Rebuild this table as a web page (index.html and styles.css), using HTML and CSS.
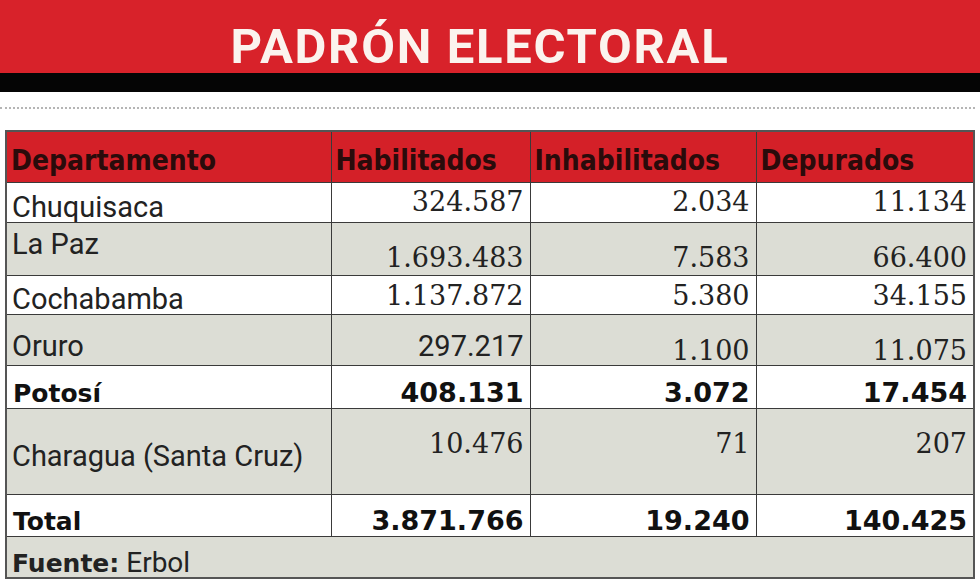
FILE: index.html
```html
<!DOCTYPE html>
<html lang="es">
<head>
<meta charset="utf-8">
<title>Padrón Electoral</title>
<link rel="stylesheet" href="styles.css">
</head>
<body>
<header class="banner">
  <h1 class="title">PADRÓN ELECTORAL</h1>
</header>
<div class="black-bar"></div>
<div class="dots"></div>
<table class="padron">
  <colgroup>
    <col class="c1"><col class="c2"><col class="c3"><col class="c4">
  </colgroup>
  <thead>
    <tr class="head">
      <th>Departamento</th>
      <th>Habilitados</th>
      <th>Inhabilitados</th>
      <th>Depurados</th>
    </tr>
  </thead>
  <tbody>
    <tr class="r-chuq white">
      <td class="name">Chuquisaca</td>
      <td class="num serif">324.587</td>
      <td class="num serif">2.034</td>
      <td class="num serif">11.134</td>
    </tr>
    <tr class="r-lapaz gray">
      <td class="name">La Paz</td>
      <td class="num serif">1.693.483</td>
      <td class="num serif">7.583</td>
      <td class="num serif">66.400</td>
    </tr>
    <tr class="r-cocha white">
      <td class="name">Cochabamba</td>
      <td class="num serif">1.137.872</td>
      <td class="num serif">5.380</td>
      <td class="num serif">34.155</td>
    </tr>
    <tr class="r-oruro gray">
      <td class="name">Oruro</td>
      <td class="num sans">297.217</td>
      <td class="num serif">1.100</td>
      <td class="num serif">11.075</td>
    </tr>
    <tr class="r-potosi white bold">
      <td class="name">Potosí</td>
      <td class="num">408.131</td>
      <td class="num">3.072</td>
      <td class="num">17.454</td>
    </tr>
    <tr class="r-chara gray">
      <td class="name">Charagua (Santa Cruz)</td>
      <td class="num serif">10.476</td>
      <td class="num serif">71</td>
      <td class="num serif">207</td>
    </tr>
    <tr class="r-total white bold">
      <td class="name">Total</td>
      <td class="num">3.871.766</td>
      <td class="num">19.240</td>
      <td class="num">140.425</td>
    </tr>
    <tr class="r-src gray">
      <td class="source" colspan="4"><strong>Fuente:</strong> Erbol</td>
    </tr>
  </tbody>
</table>
</body>
</html>
```

FILE: styles.css
```css
html, body {
  margin: 0;
  padding: 0;
  background: #ffffff;
}

body {
  width: 980px;
  height: 580px;
  overflow: hidden;
  font-family: Roboto, "Liberation Sans", sans-serif;
  color: #1a1a1a;
}

.banner {
  height: 73px;
  background: #d8222a;
  display: flex;
  align-items: flex-start;
  justify-content: center;
  padding: 22px 20px 0 0;
  box-sizing: border-box;
}

.title {
  margin: 0;
  color: #fbf3ee;
  font-family: Roboto, "Liberation Sans", sans-serif;
  font-weight: 700;
  font-size: 49px;
  letter-spacing: 1.7px;
  line-height: 1;
}

.black-bar {
  height: 19px;
  background: #050505;
}

.dots {
  margin-top: 15px;
  margin-right: 5px;
  border-top: 2px dotted #b5b5b5;
}

.padron {
  margin: 21px 0 0 5px;
  width: 968px;
  border-collapse: collapse;
  table-layout: fixed;
  border: 2px solid #555;
}

.c1 { width: 325px; }
.c2 { width: 199px; }
.c3 { width: 226px; }
.c4 { width: 218px; }

.padron th,
.padron td {
  box-sizing: border-box;
  border: 1.5px solid #3a3a3a;
  padding: 0 6px 0 5px;
  overflow: hidden;
  white-space: nowrap;
  line-height: 1;
  vertical-align: bottom;
}

.head th {
  height: 51px;
  background: #d42028;
  color: #2a0b0b;
  text-align: left;
  font-family: "DejaVu Sans Condensed", "DejaVu Sans", sans-serif;
  font-stretch: condensed;
  font-weight: 700;
  font-size: 28px;
  padding-bottom: 7px;
  padding-left: 4px;
}

.white td { background: #ffffff; }
.gray td { background: #dcddd5; }

.name {
  font-size: 29px;
  font-weight: 400;
  color: #222;
}

.num {
  text-align: right;
}

.serif {
  font-family: "DejaVu Serif", "Liberation Serif", serif;
  font-size: 27px;
  color: #222;
}

.sans {
  font-family: Roboto, "Liberation Sans", sans-serif;
  font-size: 29px;
  color: #222;
}

/* Chuquisaca */
.r-chuq td { height: 40px; }
.r-chuq .name { padding-bottom: 0; }
.r-chuq .serif { vertical-align: top; padding-top: 5px; }

/* La Paz */
.r-lapaz td { height: 53px; }
.r-lapaz .name { vertical-align: top; padding-top: 7px; }
.r-lapaz .serif { padding-bottom: 4px; }

/* Cochabamba */
.r-cocha td { height: 39px; }
.r-cocha .name { padding-bottom: 0; }
.r-cocha .serif { padding-bottom: 5px; }

/* Oruro */
.r-oruro td { height: 51px; }
.r-oruro .name { padding-bottom: 4px; }
.r-oruro .sans { padding-bottom: 4px; }
.r-oruro .serif { padding-bottom: 1px; }

/* bold rows */
.bold td {
  font-family: "DejaVu Sans", "Liberation Sans", sans-serif;
  font-weight: 700;
  color: #111;
}
.bold .name { font-size: 25px; padding-left: 6px; }
.bold .num { font-size: 27px; }

.r-potosi td { height: 43px; padding-bottom: 2px; }

/* Charagua */
.r-chara td { height: 86px; }
.r-chara .name { padding-bottom: 23px; }
.r-chara .serif { vertical-align: top; padding-top: 21px; }

/* Total */
.r-total td { height: 42px; padding-bottom: 2px; }

/* Source */
.r-src td { height: 42px; }
.source {
  font-size: 28px;
  color: #222;
  padding-bottom: 2px;
}
.source strong {
  font-family: "DejaVu Sans", sans-serif;
  font-weight: 700;
  font-size: 25px;
}
```
